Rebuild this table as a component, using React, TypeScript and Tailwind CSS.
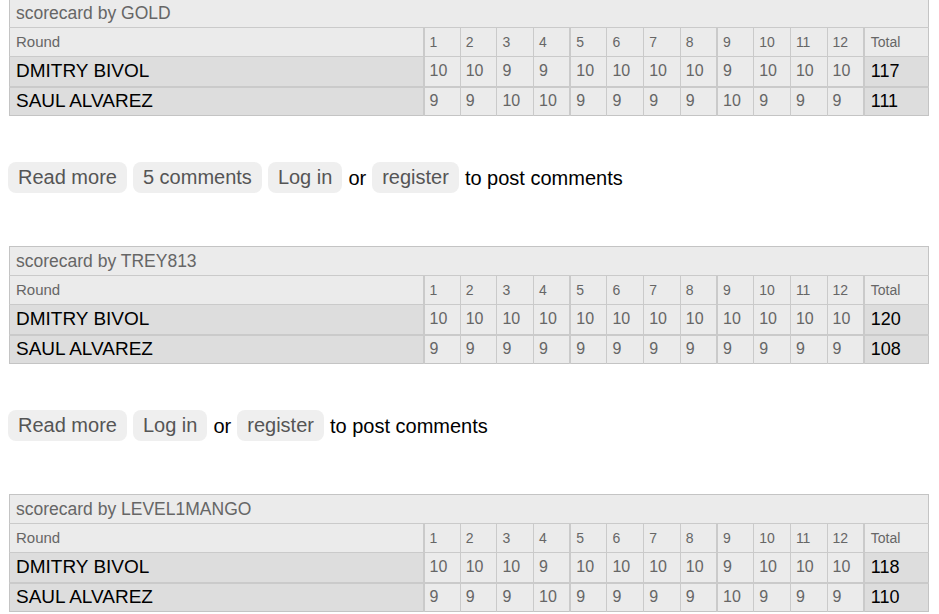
type Card = {
  by: string
  bivol: number[]
  alvarez: number[]
  comments?: number
}

const cards: Card[] = [
  {
    by: 'GOLD',
    bivol: [10, 10, 9, 9, 10, 10, 10, 10, 9, 10, 10, 10],
    alvarez: [9, 9, 10, 10, 9, 9, 9, 9, 10, 9, 9, 9],
    comments: 5,
  },
  {
    by: 'TREY813',
    bivol: [10, 10, 10, 10, 10, 10, 10, 10, 10, 10, 10, 10],
    alvarez: [9, 9, 9, 9, 9, 9, 9, 9, 9, 9, 9, 9],
  },
  {
    by: 'LEVEL1MANGO',
    bivol: [10, 10, 10, 9, 10, 10, 10, 10, 9, 10, 10, 10],
    alvarez: [9, 9, 9, 10, 9, 9, 9, 9, 10, 9, 9, 9],
  },
]

const rounds = [1, 2, 3, 4, 5, 6, 7, 8, 9, 10, 11, 12]

// every 4th round gets the heavier divider
function divider(i: number) {
  return i % 4 === 0 ? 'border-l-2' : 'border-l'
}

function FighterRow({ name, scores, second }: { name: string; scores: number[]; second?: boolean }) {
  const total = scores.reduce((a, b) => a + b, 0)
  return (
    <tr className={`${second ? 'h-[29px] border-t-2' : 'h-[30px] border-t'} border-[#cacaca]`}>
      <td className="bg-[#dddddd] px-[6px] text-[19px] leading-[22px] text-black">{name}</td>
      {scores.map((s, i) => (
        <td key={i} className={`${divider(i)} border-[#cacaca] bg-[#ebebeb] px-[5px] text-[16px] text-[#666]`}>
          {s}
        </td>
      ))}
      <td className="border-l-2 border-[#cacaca] bg-[#dddddd] px-[6px] text-[18px] leading-[22px] text-black">
        {total}
      </td>
    </tr>
  )
}

function Scorecard({ card }: { card: Card }) {
  return (
    <table className="w-[920px] table-fixed border-collapse border border-[#c4c4c4] bg-[#ebebeb]">
      <colgroup>
        <col className="w-[414px]" />
        {rounds.map((r) => (
          <col key={r} className="w-[36.7px]" />
        ))}
        <col className="w-[65px]" />
      </colgroup>
      <tbody>
        <tr className="h-[29px]">
          <td colSpan={14} className="px-[6px] text-[17.5px] leading-[22px] text-[#666]">
            scorecard by {card.by}
          </td>
        </tr>
        <tr className="h-[29px] border-t border-[#cacaca]">
          <td className="px-[6px] text-[15px] text-[#666]">Round</td>
          {rounds.map((r, i) => (
            <td key={r} className={`${divider(i)} border-[#cacaca] px-[5px] text-[14px] text-[#666]`}>
              {r}
            </td>
          ))}
          <td className="border-l-2 border-[#cacaca] px-[6px] text-[14px] text-[#666]">Total</td>
        </tr>
        <FighterRow name="DMITRY BIVOL" scores={card.bivol} />
        <FighterRow name="SAUL ALVAREZ" scores={card.alvarez} second />
      </tbody>
    </table>
  )
}

function Pill({ children }: { children: React.ReactNode }) {
  return (
    <span className="rounded-[8px] bg-[#efefef] px-[10px] py-[4px] leading-[23px] text-[#555]">
      {children}
    </span>
  )
}

export default function App() {
  return (
    <main className="min-h-screen bg-white px-[9px] font-['Liberation_Sans',Arial,sans-serif]">
      <div className="-mt-[2px]">
        {cards.map((card) => (
          <section key={card.by} className="pb-[53px]">
            <Scorecard card={card} />
            <div className="mt-[46px] -ml-[1px] flex h-[31px] items-center gap-[6px] text-[20px] text-black">
              <Pill>Read more</Pill>
              {card.comments ? <Pill>{card.comments} comments</Pill> : null}
              <Pill>Log in</Pill>
              <span>or</span>
              <Pill>register</Pill>
              <span>to post comments</span>
            </div>
          </section>
        ))}
      </div>
    </main>
  )
}
